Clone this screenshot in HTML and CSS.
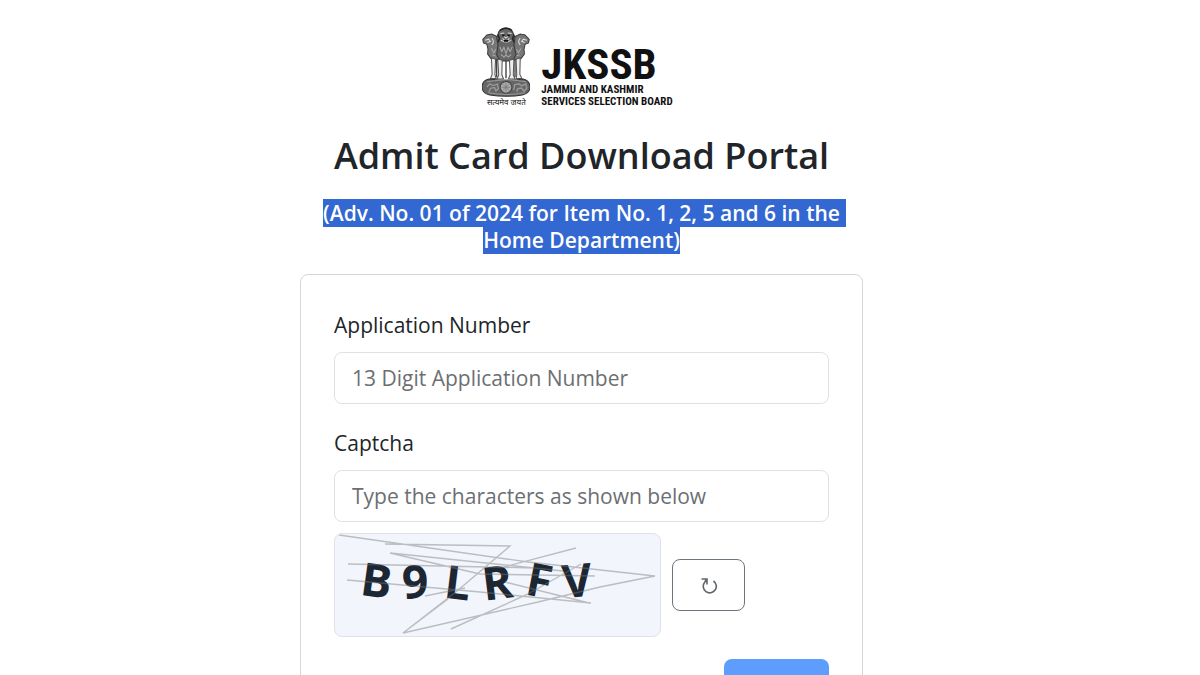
FILE: index.html
```html
<!DOCTYPE html>
<html lang="en">
<head>
<meta charset="utf-8">
<meta name="viewport" content="width=device-width, initial-scale=1">
<title>Admit Card Download Portal</title>
<link rel="stylesheet" href="styles.css">
</head>
<body>
<main class="page">
  <header class="header">
    <div class="logo">
      <div class="emblem">
        <svg class="emblem-art" viewBox="34 20 138 202" aria-hidden="true">
          <g fill="#777" stroke="#3a3a3a" stroke-width="3">
            <path d="M78 48 62 40 48 43 36 56 38 66 48 70 51 84 50 98 60 112 82 116 90 80Z"/>
            <path d="M128 48 144 40 158 43 170 56 168 66 158 70 155 84 156 98 146 112 124 116 116 80Z"/>
            <path d="M82 34Q103 12 122 34L129 52 126 72 132 100 122 118H86L76 100 80 72 76 52Z" fill="#666"/>
          </g>
          <g fill="none" stroke="#ddd" stroke-width="3">
            <path d="M43 58 53 55 58 62 49 65M163 58 153 55 148 62 157 65M62 52Q71 62 62 72M144 52Q135 62 144 72"/>
            <path d="M87 39 98 37M108 37 119 39M97 47 103 52 109 47M88 58Q103 69 118 58M93 53 98 57M113 53 108 57"/>
            <path d="M61 82 68 94 74 84M146 82 139 94 133 84M85 77 91 91 97 79 103 96 109 79 115 91 121 77M64 100 73 104M142 100 133 104M88 99 97 107 103 101 110 107 118 99" stroke="#aaa"/>
          </g>
          <path d="M84 30Q103 17 121 30M80 42 84 54 80 64M126 42 122 54 126 64" fill="none" stroke="#222" stroke-width="4"/>
          <path d="M92 44h7M107 44h7M97 60h12" stroke="#111" stroke-width="5"/>
          <g fill="#eee" stroke="#555" stroke-width="3">
            <path d="M61 109 73 113 71 158 75 169H58L63 157Z"/>
            <path d="M79 112 92 116 91 158 96 170H77L82 158Z"/>
            <path d="M113 116 126 112 124 158 129 170H110L115 158Z"/>
            <path d="M132 113 144 109 143 157 149 169H132L134 158Z"/>
          </g>
          <path d="M76 112V164M103 116V168M129 112V164" stroke="#444" stroke-width="4"/>
          <path d="M54 170Q103 178 152 170Q172 174 172 193Q172 211 150 216Q103 224 56 216Q34 211 34 193Q34 174 54 170Z" fill="#666" stroke="#333" stroke-width="3"/>
          <path d="M48 178Q103 168 161 178M52 210Q103 220 158 210" fill="none" stroke="#999" stroke-width="3"/>
          <circle cx="103" cy="194" r="17" fill="#aaa" stroke="#444" stroke-width="3"/>
          <path d="M103 181V207M90 194H116M94 185 112 203M112 185 94 203" stroke="#777" stroke-width="2"/>
          <path d="M48 193 56 184 66 189 78 185 81 198 74 204 70 195 58 197 54 207M125 202 128 187 140 184 148 190 160 184 163 197 155 205 148 196 137 198 134 207" fill="none" stroke="#999" stroke-width="4"/>
        </svg>
        <span class="motto" lang="hi">सत्यमेव जयते</span>
      </div>
      <div class="wordmark">
        <span class="wordmark-name">JKSSB</span>
        <span class="wordmark-line">JAMMU AND KASHMIR</span>
        <span class="wordmark-line">SERVICES SELECTION BOARD</span>
      </div>
    </div>
    <h1 class="title">Admit Card Download Portal</h1>
    <p class="notice"><mark class="selected selected-first">(Adv. No. 01 of 2024 for Item No. 1, 2, 5 and 6 in the</mark><br><mark class="selected">Home Department)</mark></p>
  </header>

  <form class="card">
    <div class="field">
      <label class="label" for="application">Application Number</label>
      <input class="input" id="application" type="text" placeholder="13 Digit Application Number">
    </div>
    <div class="field">
      <label class="label" for="captcha">Captcha</label>
      <input class="input" id="captcha" type="text" placeholder="Type the characters as shown below">
    </div>
    <div class="captcha-row">
      <svg class="captcha" viewBox="0 0 325 102" role="img" aria-label="Captcha characters">
        <g class="captcha-text">
          <text x="26" y="63" transform="rotate(8 41 47)">B</text>
          <text x="67" y="64" transform="rotate(-4 81 48)">9</text>
          <text x="110" y="65" transform="rotate(7 121 48)">L</text>
          <text x="147" y="65" transform="rotate(-7 163 48)">R</text>
          <text x="192" y="63" transform="rotate(11 205 46)">F</text>
          <text x="227" y="63" transform="rotate(-5 243 46)">V</text>
        </g>
        <path class="captcha-lines" d="M4 1 193 28M50 10 175 12 122 57M122 57 68 99 203 68M68 99 113 65M203 68 265 53 320 42 193 28M55 19 228 37M55 19 145 40M145 40 260 42M13 30 200 34M12 46 145 58 256 69M116 95 193 60M193 60 246 30M90 62 130 54M165 34 241 14M170 48 254 69"/>
      </svg>
      <button class="refresh" type="button" aria-label="Refresh captcha">
        <svg class="refresh-icon" viewBox="0 0 18 18" aria-hidden="true"><path d="M13.5 5A6.5 6.5 0 1 1 4.5 6.5L6.5 3.5M1.5 3H7V8.5"/></svg>
      </button>
    </div>
    <div class="actions"><button class="submit" type="submit" aria-label="Submit"></button></div>
  </form>
</main>
</body>
</html>
```
FILE: styles.css
```css
* { box-sizing: border-box; }
body {
  margin: 0;
  background: #fff;
  color: #212529;
  font-family: "Open Sans", "Noto Sans", sans-serif;
  font-size: 21px;
}
.page {
  max-width: 563px;
  margin: 0 auto;
  padding-top: 27px;
}
@media (min-width: 700px) {
  body { padding-right: 37px; }
}
.header { text-align: center; }
.logo {
  display: flex;
  justify-content: center;
  gap: 11px;
  padding-right: 8px;
  color: #111;
}
.emblem { display: flex; flex-direction: column; align-items: center; width: 48px; }
.emblem-art { display: block; width: 48px; height: 70px; }
.motto { font-size: 8px; line-height: 10px; font-weight: 400; white-space: nowrap; }
.wordmark {
  display: flex;
  flex-direction: column;
  padding-top: 17px;
  font-family: "Roboto Condensed", Roboto, sans-serif;
  font-weight: 700;
  text-align: left;
}
.wordmark-name { font-size: 43px; line-height: 40px; }
.wordmark-line { font-size: 11px; line-height: 12px; white-space: nowrap; }
.title { margin: 24px 0 0; font-size: 36px; line-height: 48px; font-weight: 600; }
.notice { margin: 20px 0 0; font-size: 21px; line-height: 27px; font-weight: 600; }
.selected { background: #3367d1; color: #fff; }
.selected-first { margin-right: -6px; padding-right: 6px; }
.card {
  margin-top: 20px;
  padding: 33px;
  border: 1px solid #d5d6d8;
  border-radius: 8px;
}
.field { margin-bottom: 22px; }
.label { display: block; margin-bottom: 10px; line-height: 34px; }
.input {
  display: block;
  width: 100%;
  height: 52px;
  padding: 0 17px;
  border: 1px solid #dee2e6;
  border-radius: 8px;
  background: #fff;
  color: #212529;
  font: inherit;
}
.input::placeholder { color: #6c6f72; opacity: 1; }
.captcha-row { display: flex; align-items: center; gap: 11px; margin-top: -11px; }
.captcha {
  width: 327px;
  height: 104px;
  border: 1px solid #dee2e6;
  border-radius: 8px;
  background: #f2f6fc;
}
.captcha-lines { fill: none; stroke: #777; stroke-opacity: .45; stroke-width: 1.4; }
.captcha-text { fill: #1c2733; font-family: "Open Sans", sans-serif; font-weight: 700; font-size: 46px; }
.refresh {
  display: grid;
  place-items: center;
  width: 73px;
  height: 52px;
  border: 1px solid #6c757d;
  border-radius: 8px;
  background: #fff;
}
.refresh-icon { width: 18px; height: 18px; fill: none; stroke: #5c676b; stroke-width: 1.6; }
.actions { display: flex; justify-content: flex-end; margin-top: 22px; }
.submit { width: 105px; height: 52px; border: 0; border-radius: 8px; background: #5c9dfd; }
```
